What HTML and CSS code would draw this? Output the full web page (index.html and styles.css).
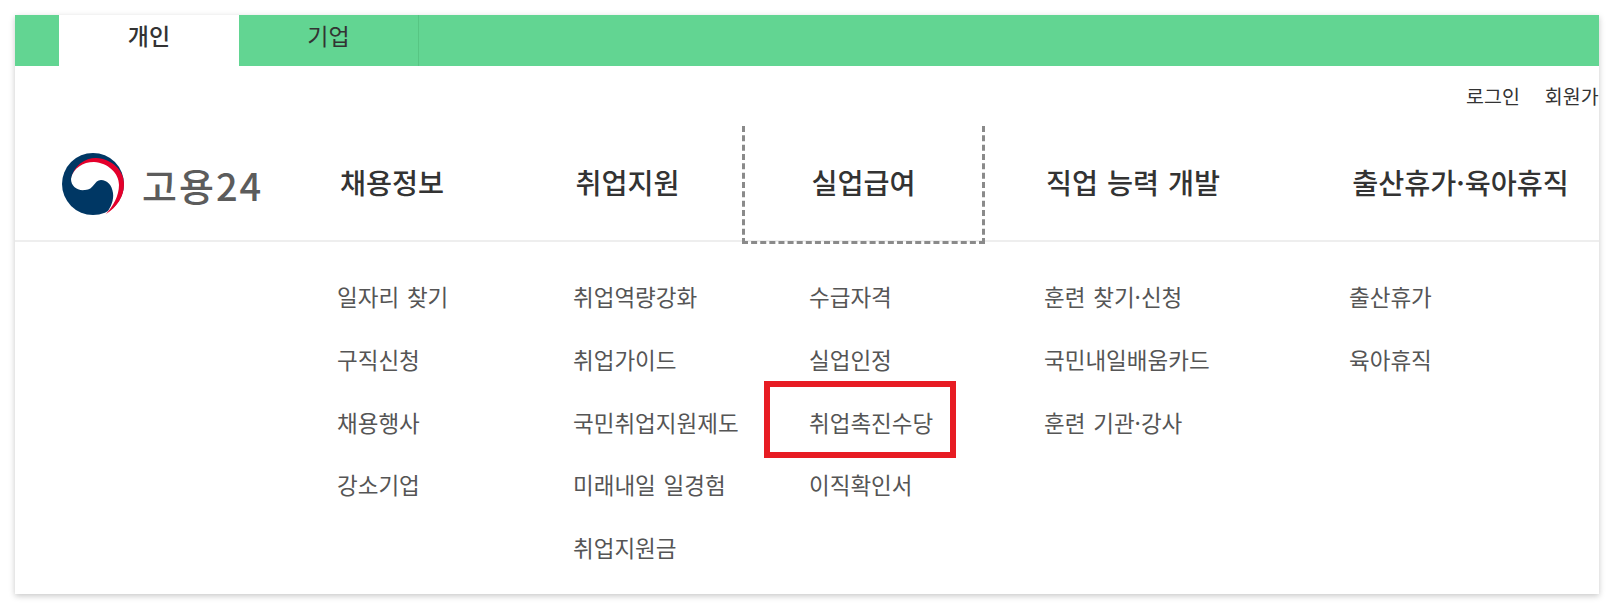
FILE: index.html
```html
<!DOCTYPE html>
<html lang="ko">
<head>
    <meta charset="UTF-8">
    <meta name="viewport" content="width=device-width, initial-scale=1.0">
    <title>고용24</title>
    <link rel="stylesheet" href="styles.css">
</head>
<body>
    <div class="card">
        <div class="tabs">
            <a class="tab active">개인</a>
            <a class="tab">기업</a>
        </div>

        <div class="util">
            <a>로그인</a>
            <a>회원가</a>
        </div>

        <div class="gnb">
            <div class="logo">
                <svg class="logo-mark" viewBox="0 0 64 64" width="64" height="64" aria-hidden="true">
                    <circle cx="32" cy="32" r="31" fill="#003764"/>
                    <path fill="#e4002b" d="M10 27C13 13 24 6 35 6C51 7 63 18 63 32C63 45 56 55 45 62C51 54 57 44 57 33C57 22 46 12 33 11C22 10 13 16 10 27Z"/>
                    <path fill="#fff" d="M10 27C12 16 22 10 33 10C47 11 58 21 58 33C58 44 52 54 45 62C50 55 53 48 52 41C51 33 46 28 40 28C33 28 33 38 24 38C16 39 10 34 10 27Z"/>
                </svg>
                <span class="logo-text">고용24</span>
            </div>
            <a class="gnb-item">채용정보</a>
            <a class="gnb-item">취업지원</a>
            <a class="gnb-item focused">실업급여</a>
            <a class="gnb-item">직업 능력 개발</a>
            <a class="gnb-item">출산휴가·육아휴직</a>
        </div>

        <div class="submenu">
            <ul class="col col-1">
                <li>일자리 찾기</li>
                <li>구직신청</li>
                <li>채용행사</li>
                <li>강소기업</li>
            </ul>
            <ul class="col col-2">
                <li>취업역량강화</li>
                <li>취업가이드</li>
                <li>국민취업지원제도</li>
                <li>미래내일 일경험</li>
                <li>취업지원금</li>
            </ul>
            <ul class="col col-3">
                <li>수급자격</li>
                <li>실업인정</li>
                <li class="marked">취업촉진수당</li>
                <li>이직확인서</li>
            </ul>
            <ul class="col col-4">
                <li>훈련 찾기·신청</li>
                <li>국민내일배움카드</li>
                <li>훈련 기관·강사</li>
            </ul>
            <ul class="col col-5">
                <li>출산휴가</li>
                <li>육아휴직</li>
            </ul>
        </div>
    </div>
</body>
</html>
```

FILE: styles.css
```css
/* page */
body {
    margin: 0;
    padding: 15px;
    background: #ffffff;
    color: #333;
    font-family: "Noto Sans CJK KR", "Noto Sans", sans-serif;
}

.card {
    width: 1584px;
    height: 579px;
    background: #ffffff;
    box-shadow: 0 2px 6px rgba(0, 0, 0, 0.22);
    overflow: hidden;
}

/* top tabs */
.tabs {
    display: flex;
    height: 51px;
    padding-left: 44px;
    background: #62d592;
}

.tab {
    width: 180px;
    box-sizing: border-box;
    font-size: 23px;
    line-height: 41px;
    text-align: center;
    color: #333;
    border-right: 1px solid #57c583;
}

.tab.active {
    background: #ffffff;
    border-right: none;
    font-weight: 500;
}

/* login row */
.util {
    display: flex;
    gap: 25px;
    height: 60px;
    padding-left: 1451px;
    font-size: 19.5px;
    line-height: 60px;
    white-space: nowrap;
}

/* main nav */
.gnb {
    display: grid;
    grid-template-columns: 257px 240px 231px 241px 298px 317px;
    height: 114px;
    border-bottom: 2px solid #eeeeee;
}

.logo {
    display: flex;
    align-items: center;
    gap: 17px;
    padding: 0 0 2px 46px;
}

.logo-mark {
    flex: none;
}

.logo-text {
    font-size: 38px;
    font-weight: 500;
    letter-spacing: 2px;
    color: #5c5c5c;
    white-space: nowrap;
}

.gnb-item {
    box-sizing: border-box;
    height: 118px;
    font-size: 28.3px;
    font-weight: 500;
    line-height: 112px;
    text-align: center;
    white-space: nowrap;
    word-spacing: 1px;
    color: #333;
}

.gnb-item:last-child {
    padding-left: 40px;
}

.focused {
    margin: 0 -1px;
    border: 3px dashed #8a8a8a;
    border-top: none;
}

/* dropdown lists */
.submenu {
    display: grid;
    grid-template-columns: 235px 236px 241px 298px 317px;
    padding: 23px 0 0 257px;
}

.col {
    margin: 0;
    padding: 0;
    list-style: none;
    font-size: 22.5px;
    line-height: 62.8px;
    word-spacing: 1.5px;
    color: #555;
    white-space: nowrap;
}

.col-1 { padding-left: 65px; }
.col-2 { padding-left: 66px; }
.col-3 { padding-left: 66px; }
.col-4 { padding-left: 60px; }
.col-5 { padding-left: 67px; }

.marked {
    position: relative;
}

.marked::after {
    content: "";
    position: absolute;
    top: -10px;
    left: -45px;
    width: 180px;
    height: 65px;
    border: 6px solid #e71c23;
}
```
